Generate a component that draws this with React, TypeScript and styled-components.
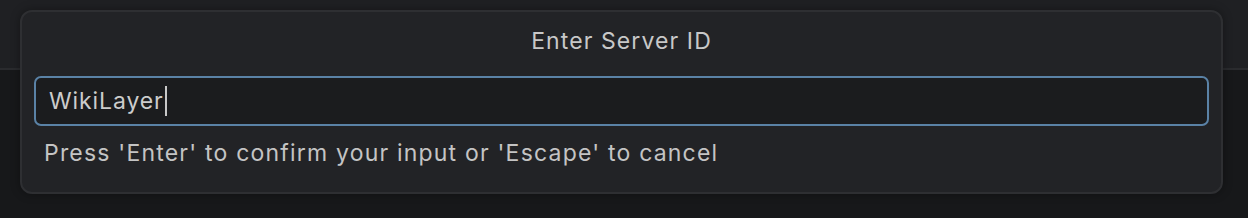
import React from "react";
import styled, { createGlobalStyle } from "styled-components";

const Global = createGlobalStyle`
	html, body {
		margin: 0;
		padding: 0;
		background: #17181a;
		font-family: Inter, "Noto Sans", sans-serif;
	}
`;

const Page = styled.div`
	position: relative;
	width: 1248px;
	height: 218px;
	overflow: hidden;
	background: #17181a;
`;

const TopBar = styled.div`
	height: 68px;
	background: #1f2023;
	border-bottom: 2px solid #2a2b2e;
`;

const Dialog = styled.div`
	position: absolute;
	left: 20px;
	top: 10px;
	width: 1203px;
	height: 184px;
	box-sizing: border-box;
	background: #222326;
	border: 2px solid #2e2f32;
	border-radius: 12px;
	box-shadow: 0 0 10px rgba(0, 0, 0, 0.35);
	display: flex;
	flex-direction: column;
	padding: 0 12px;
	font-size: 23px;
	letter-spacing: 1.1px;
`;

const Title = styled.div`
	height: 64px;
	display: flex;
	align-items: center;
	justify-content: center;
	color: #c8c8c8;
	padding-bottom: 6px;
	box-sizing: border-box;
`;

const InputBox = styled.div`
	height: 50px;
	box-sizing: border-box;
	background: #1b1c1e;
	border: 2px solid #5a82a6;
	border-radius: 7px;
	display: flex;
	align-items: center;
	padding-left: 13px;
	color: #cccccc;
	letter-spacing: 0.9px;
`;

const Caret = styled.span`
	display: inline-block;
	width: 2px;
	height: 30px;
	background: #c8c8c8;
	margin-left: 1px;
`;

const Hint = styled.div`
	padding: 13px 0 0 10px;
	color: #c4c4c4;
	letter-spacing: 1.2px;
`;

export default function App() {
	return (
		<>
			<Global />
			<Page>
				<TopBar />
				<Dialog>
					<Title>Enter Server ID</Title>
					<InputBox>
						WikiLayer
						<Caret />
					</InputBox>
					<Hint>Press 'Enter' to confirm your input or 'Escape' to cancel</Hint>
				</Dialog>
			</Page>
		</>
	);
}
